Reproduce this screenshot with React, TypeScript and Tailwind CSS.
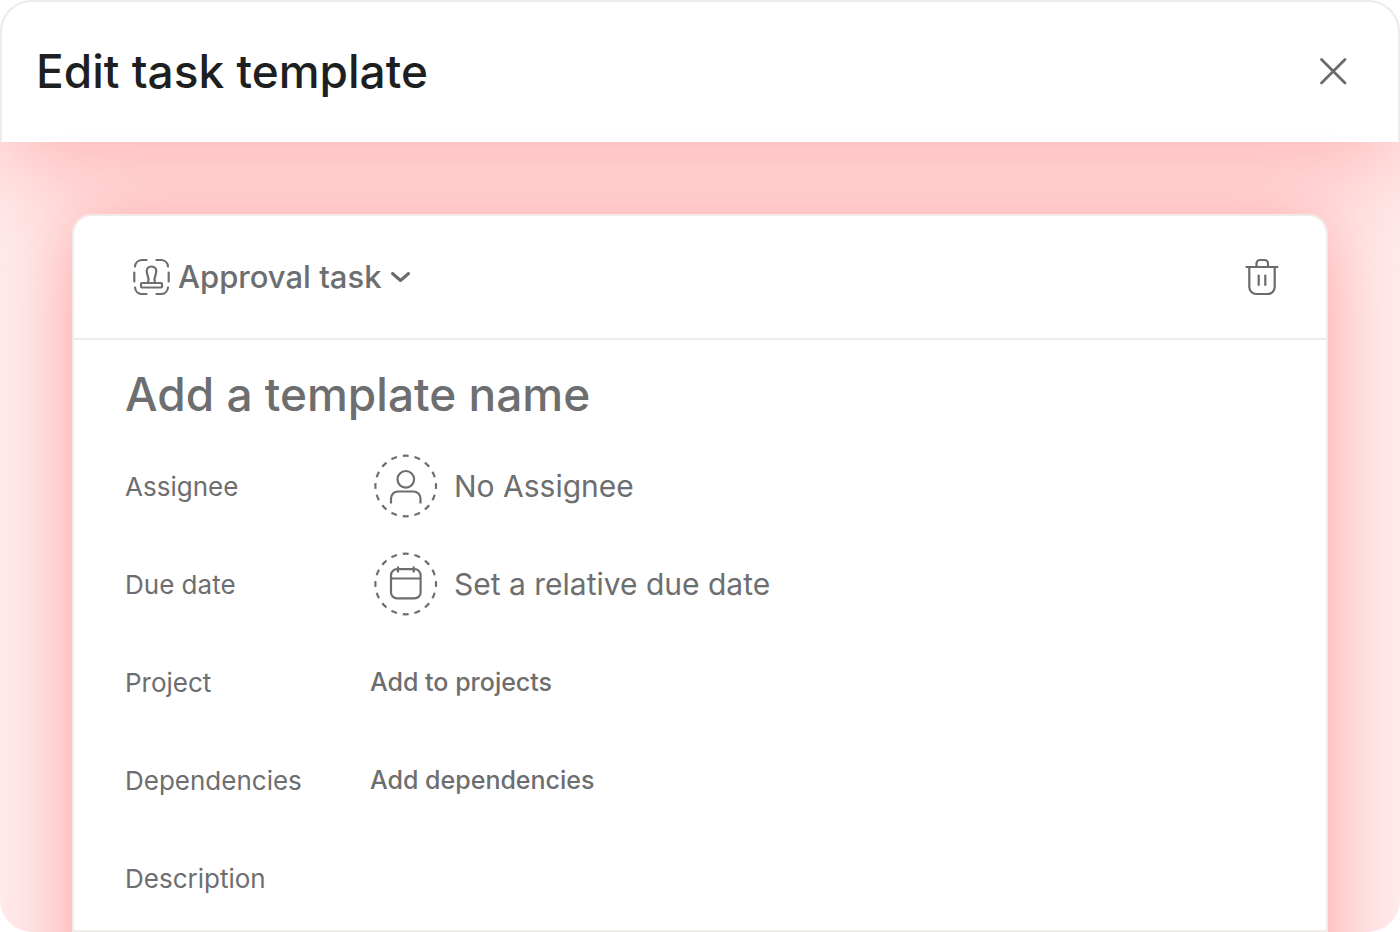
import type { ReactNode } from "react";

function CloseIcon() {
  return (
    <svg width="32" height="32" viewBox="0 0 32 32" fill="none" stroke="#6a6b6c" strokeWidth="2.800" strokeLinecap="round" aria-hidden="true">
      <path d="M3.500 4.500 27 28M27 4.500 3.500 28" />
    </svg>
  );
}

function StampIcon() {
  return (
    <svg width="40" height="40" viewBox="0 0 40 40" fill="none" stroke="#6d6e6f" strokeWidth="2.200" strokeLinecap="round" strokeLinejoin="round" aria-hidden="true">
      <path d="M3 9.500C3.300 6 6 3.300 9.500 3H14.500M24.500 3H29.500C33 3.300 35.700 6 36 9.500M36 30.500C35.700 34 33 36.700 29.500 37H24.500M14.500 37H9.500C6 36.700 3.300 34 3 30.500M2.300 15.500V24.500M36.700 15.500V24.500" />
      <path d="M10 26H29a1 1 0 0 1 1 1V29.500a1 1 0 0 1-1 1H10a1 1 0 0 1-1-1V27a1 1 0 0 1 1-1Z" />
      <path d="M16 25.800C17 22.500 16.500 20 15.300 17.500C13.500 13 15.500 9.500 19.500 9.500S25.500 13 23.700 17.500C22.500 20 22 22.500 23 25.800" />
    </svg>
  );
}

function ChevronIcon() {
  return (
    <svg width="24" height="24" viewBox="0 0 24 24" fill="none" stroke="#6a6b6c" strokeWidth="3" strokeLinecap="round" strokeLinejoin="round" aria-hidden="true">
      <path d="M5.500 8.500 13.500 15.500 21.500 8.500" />
    </svg>
  );
}

function TrashIcon() {
  return (
    <svg width="36" height="40" viewBox="0 0 36 40" fill="none" stroke="#6a6b6c" strokeWidth="2.200" strokeLinecap="round" strokeLinejoin="round" aria-hidden="true">
      <path d="M2.500 10H33.500M12.500 10V6.500A3.500 3.500 0 0 1 16 3H20.500A3.500 3.500 0 0 1 24 6.500V10M5.300 10V30A7 7 0 0 0 12.300 37H23.700A7 7 0 0 0 30.700 30V10M14.700 18.500V28M21.300 18.500V28" />
    </svg>
  );
}

function DashedCircle({ children }: { children: ReactNode }) {
  return (
    <svg width="64" height="64" viewBox="0 0 64 64" fill="none" stroke="#6d6e6f" strokeWidth="2.200" aria-hidden="true">
      <circle cx="31.700" cy="32" r="30.300" pathLength="160" strokeDasharray="5 5" strokeDashoffset="2.500" />
      {children}
    </svg>
  );
}

function PersonIcon() {
  return (
    <DashedCircle>
      <circle cx="31.800" cy="25.300" r="8.300" />
      <path d="M17 49.500V44.500A7 7 0 0 1 24 37.500H39.500A7 7 0 0 1 46.500 44.500V49.500" />
    </DashedCircle>
  );
}

function CalendarIcon() {
  return (
    <DashedCircle>
      <rect x="17" y="17.200" width="29.600" height="29.200" rx="6" />
      <path d="M17 26.500H46.600M24 14.500V20.500M39.700 14.500V20.500" />
    </DashedCircle>
  );
}

function Row({ label, children }: { label: string; children?: ReactNode }) {
  return (
    <div className="flex h-[98px] items-center">
      <div className="w-[245px] shrink-0 pt-0.5 text-[26px] leading-8">{label}</div>
      {children}
    </div>
  );
}

export default function App() {
  return (
    <div className="bg-white font-['Inter',sans-serif] text-[#6d6e6f]">
      <main className="isolate min-h-screen overflow-hidden rounded-[32px] bg-[#ffeced]">
        <header className="flex h-[142px] items-center justify-between rounded-t-[32px] border-2 border-b-0 border-[#ececec] bg-white pr-12 pb-0.5 pl-[34px] shadow-[0_24px_96px_rgba(255,125,120,0.5)]">
          <h1 className="text-[46px] leading-[56px] font-medium text-[#1e1f21]">Edit task template</h1>
          <button type="button" aria-label="Close">
            <CloseIcon />
          </button>
        </header>
        <div className="relative mx-[72px] mt-18">
          {/* The glow runs on past the lower edge of the card. */}
          <div className="absolute inset-x-0 top-0 -bottom-32 rounded-[20px] shadow-[0_8px_80px_rgba(255,110,105,0.62)]" />
          <section className="relative rounded-t-[20px] border-2 border-[#f0eae8] bg-white">
            <div className="flex h-[124px] items-center justify-between border-b-2 border-[#ececec] pr-[46px] pl-[58px]">
              <button type="button" className="flex items-center gap-1.5 text-[31px] leading-10 font-medium">
                <StampIcon />
                Approval task
                <ChevronIcon />
              </button>
              <button type="button" aria-label="Delete task template">
                <TrashIcon />
              </button>
            </div>
            <div className="px-[51px] pt-[26px] pb-[3px]">
              <input
                type="text"
                aria-label="Template name"
                placeholder="Add a template name"
                className="block h-[56px] w-full bg-transparent text-[46px] leading-[56px] font-medium outline-none placeholder:text-[#6d6e6f] placeholder:opacity-100"
              />
              <div className="mt-[15px]">
                <Row label="Assignee">
                  <button type="button" className="flex items-center gap-4 pl-1 text-[30px] leading-10">
                    <PersonIcon />
                    No Assignee
                  </button>
                </Row>
                <Row label="Due date">
                  <button type="button" className="flex items-center gap-4 pl-1 text-[30px] leading-10">
                    <CalendarIcon />
                    Set a relative due date
                  </button>
                </Row>
                <Row label="Project">
                  <button type="button" className="text-[25px] leading-8 font-medium">Add to projects</button>
                </Row>
                <Row label="Dependencies">
                  <button type="button" className="text-[25px] leading-8 font-medium">Add dependencies</button>
                </Row>
                <Row label="Description" />
              </div>
            </div>
          </section>
        </div>
      </main>
    </div>
  );
}
